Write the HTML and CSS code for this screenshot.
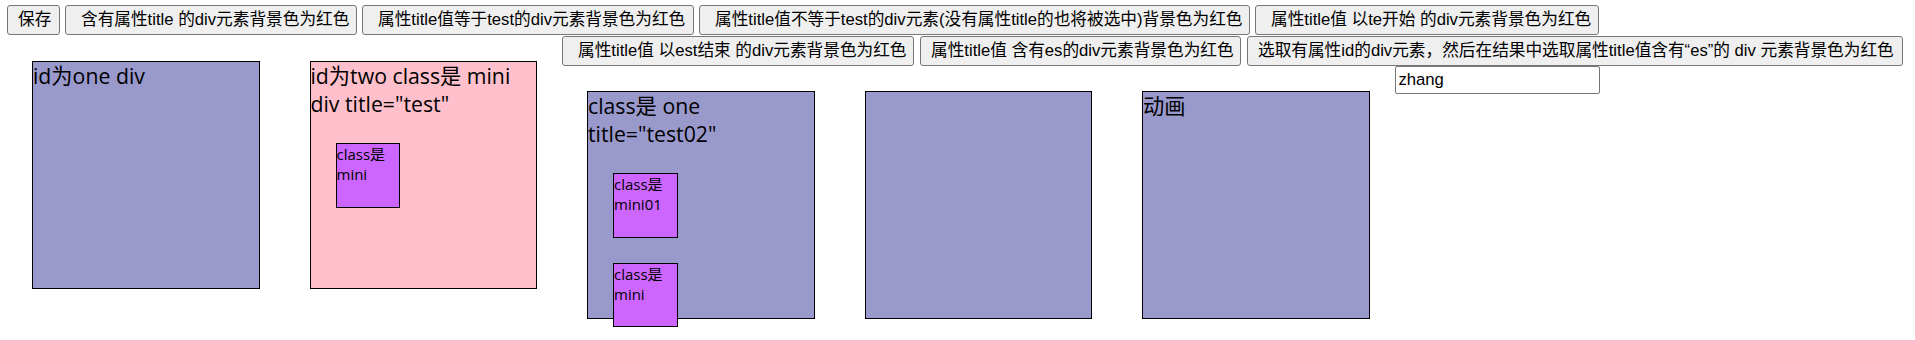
FILE: index.html
```html
<!DOCTYPE html>
<html lang="zh-CN">
<head>
<meta charset="utf-8">
<title>jQuery 选择器</title>
<link rel="stylesheet" href="styles.css">
</head>
<body>
<div class="row row1">
  <button class="btn b1">保存</button>
  <button class="btn lead b2">含有属性title 的div元素背景色为红色</button>
  <button class="btn lead b3">属性title值等于test的div元素背景色为红色</button>
  <button class="btn lead b4">属性title值不等于test的div元素(没有属性title的也将被选中)背景色为红色</button>
  <button class="btn lead b5">属性title值 以te开始 的div元素背景色为红色</button>
</div>
<div class="main">
  <div class="box one">id为one div</div>
  <div class="box two" title="test">id为two class是 mini div title="test"
    <div class="mini">class是 mini</div>
  </div>
  <div class="right">
    <div class="row row2">
      <button class="btn lead b6">属性title值 以est结束 的div元素背景色为红色</button>
      <button class="btn b7">属性title值 含有es的div元素背景色为红色</button>
      <button class="btn b8">选取有属性id的div元素，然后在结果中选取属性title值含有“es”的 div 元素背景色为红色</button>
    </div>
    <div class="lower">
      <div class="box three" title="test02">class是 one title="test02"
        <div class="mini">class是 mini01</div>
        <div class="mini">class是 mini</div>
      </div>
      <div class="box four"></div>
      <div class="box five">动画</div>
      <input class="field" type="text" value="zhang">
    </div>
  </div>
</div>
</body>
</html>
```
FILE: styles.css
```css
html, body {
  margin: 0;
  padding: 0;
  background: #ffffff;
}

body {
  padding: 5px 0 0 7px;
  font-family: "Open Sans", "Noto Sans CJK SC", sans-serif;
  color: #000;
}

.row {
  display: flex;
  align-items: flex-start;
}

.row1 {
  gap: 5px;
  margin-bottom: 1px;
}

.row2 {
  gap: 6px;
}

.btn {
  box-sizing: border-box;
  height: 30px;
  margin: 0;
  padding: 0 10px;
  border: 1px solid #767676;
  border-radius: 3px;
  background: #efefef;
  color: #000;
  font-family: "Liberation Sans", "Noto Sans CJK SC", sans-serif;
  font-size: 16.67px;
  line-height: 22px;
  white-space: nowrap;
  text-align: center;
  flex: none;
}

.btn.lead {
  padding-left: 15px;
}

.b1 { width: 53px; }
.b2 { width: 292px; }
.b3 { width: 332px; }
.b4 { width: 551px; }
.b5 { width: 344px; }
.b6 { width: 352px; }
.b7 { width: 321px; }
.b8 { width: 656px; }

.main {
  display: flex;
  align-items: flex-start;
}

.right {
  display: flex;
  flex-direction: column;
}

.lower {
  display: flex;
  align-items: flex-start;
}

.box {
  box-sizing: content-box;
  width: 225.5px;
  height: 225.5px;
  margin: 25px;
  border: 1px solid #000;
  background: #9999cc;
  font-size: 21.25px;
  line-height: 28px;
  flex: none;
}

.box.two {
  background: #ffc0cb;
}

.mini {
  width: 62.5px;
  height: 62.5px;
  margin: 25px;
  border: 1px solid #000;
  background: #cc66ff;
  font-size: 15px;
  line-height: 20px;
}

.field {
  box-sizing: border-box;
  width: 205px;
  height: 28px;
  margin: 0;
  padding: 0 3px;
  border: 1px solid #767676;
  border-radius: 2px;
  font-family: "Liberation Sans", Arial, sans-serif;
  font-size: 16.67px;
  color: #000;
  background: #fff;
  flex: none;
}
```
